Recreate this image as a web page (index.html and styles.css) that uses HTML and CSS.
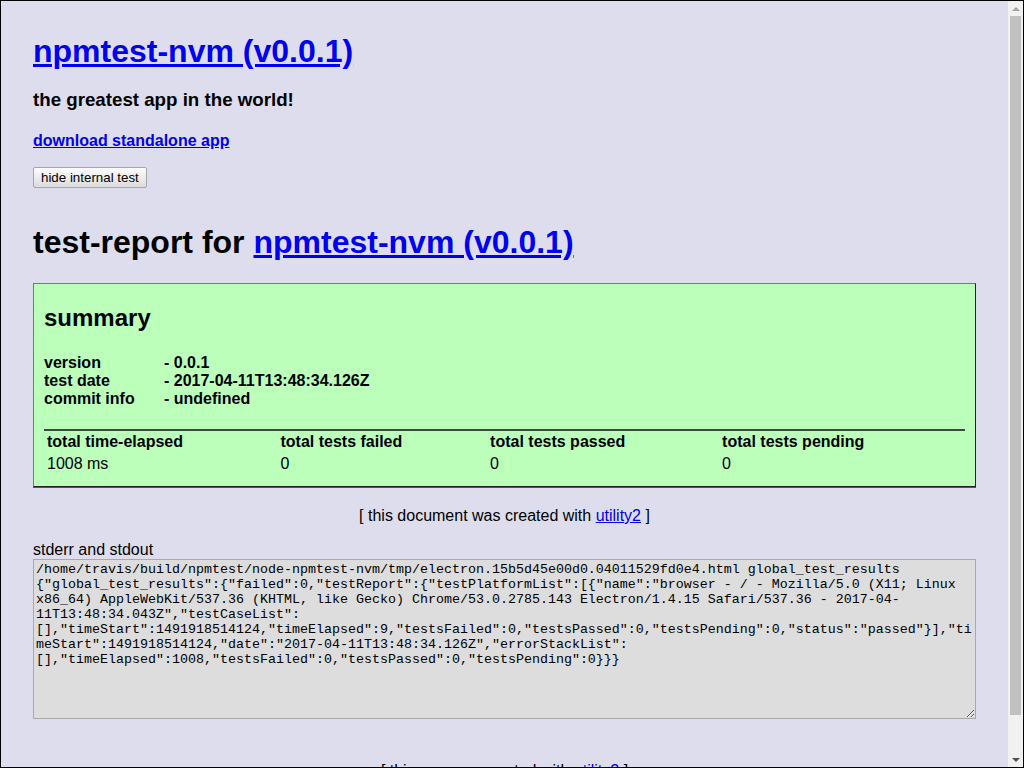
FILE: index.html
```html
<!DOCTYPE html>
<html>
<head>
<meta charset="utf-8">
<title>npmtest-nvm (v0.0.1)</title>
<link rel="stylesheet" href="styles.css">
</head>
<body>
<div class="frame">
  <div class="viewport">
    <div class="page">
      <h1 class="title"><a href="#">npmtest-nvm (v0.0.1)</a></h1>
      <h3 class="tagline">the greatest app in the world!</h3>
      <h4 class="download"><a href="#">download standalone app</a></h4>
      <button class="toggle">hide internal test</button>

      <h1 class="report-title">test-report for <a href="#">npmtest-nvm (v0.0.1)</a></h1>

      <div class="summary">
        <h2 class="summary-title">summary</h2>
        <div class="info">
          <div class="info-row"><span class="info-key">version</span><span>- 0.0.1</span></div>
          <div class="info-row"><span class="info-key">test date</span><span>- 2017-04-11T13:48:34.126Z</span></div>
          <div class="info-row"><span class="info-key">commit info</span><span>- undefined</span></div>
        </div>
        <table class="totals">
          <thead>
            <tr><th>total time-elapsed</th><th>total tests failed</th><th>total tests passed</th><th>total tests pending</th></tr>
          </thead>
          <tbody>
            <tr><td>1008 ms</td><td>0</td><td>0</td><td>0</td></tr>
          </tbody>
        </table>
      </div>

      <div class="credit">[ this document was created with <a href="#">utility2</a> ]</div>

      <label class="output-label">stderr and stdout</label>
      <textarea class="output" readonly>/home/travis/build/npmtest/node-npmtest-nvm/tmp/electron.15b5d45e00d0.04011529fd0e4.html global_test_results {"global_test_results":{"failed":0,"testReport":{"testPlatformList":[{"name":"browser - / - Mozilla/5.0 (X11; Linux x86_64) AppleWebKit/537.36 (KHTML, like Gecko) Chrome/53.0.2785.143 Electron/1.4.15 Safari/537.36 - 2017-04-11T13:48:34.043Z","testCaseList":[],"timeStart":1491918514124,"timeElapsed":9,"testsFailed":0,"testsPassed":0,"testsPending":0,"status":"passed"}],"timeStart":1491918514124,"date":"2017-04-11T13:48:34.126Z","errorStackList":[],"timeElapsed":1008,"testsFailed":0,"testsPassed":0,"testsPending":0}}}</textarea>

      <div class="credit footer">[ this app was created with <a href="#">utility2</a> ]</div>
    </div>
  </div>
  <div class="scrollbar" aria-hidden="true">
    <div class="sb-button"><span class="arrow-up"></span></div>
    <div class="sb-track"><div class="sb-thumb"></div></div>
    <div class="sb-button"><span class="arrow-down"></span></div>
  </div>
</div>
</body>
</html>
```

FILE: styles.css
```css
html, body {
  margin: 0;
  padding: 0;
}

.frame {
  width: 1024px;
  height: 768px;
  box-sizing: border-box;
  border: 1px solid #000;
  display: flex;
  background: #dde;
  color: #000;
  font-family: "Liberation Sans", Arial, sans-serif;
  font-size: 16px;
  overflow: hidden;
}

.viewport {
  flex: 1;
  min-width: 0;
  overflow: hidden;
}

.page {
  padding: 0 32px 26px;
  display: flow-root;
}

/* scrollbar */
.scrollbar {
  width: 15px;
  flex: none;
  background: #f1f1f1;
  display: flex;
  flex-direction: column;
}

.sb-button {
  height: 15px;
  flex: none;
  display: flex;
  align-items: center;
  justify-content: center;
}

.arrow-up {
  width: 0;
  height: 0;
  border-left: 4px solid transparent;
  border-right: 4px solid transparent;
  border-bottom: 4px solid #a3a3a3;
}

.arrow-down {
  width: 0;
  height: 0;
  border-left: 4px solid transparent;
  border-right: 4px solid transparent;
  border-top: 4px solid #505050;
}

.sb-track {
  flex: 1;
  padding: 0 2px;
}

.sb-thumb {
  height: 699px;
  background: #c1c1c1;
}

a {
  color: #00e;
  text-decoration: underline;
}

.title {
  font-size: 32px;
  line-height: 37px;
  margin: 32px 0 0;
}

.tagline {
  font-size: 18.72px;
  line-height: 22px;
  margin: 19px 0 0;
}

.download {
  font-size: 16px;
  line-height: 18px;
  margin: 21px 0 0;
}

.toggle {
  display: block;
  margin: 17px 0 0;
  height: 21px;
  padding: 0 7px;
  font-family: "Liberation Sans", Arial, sans-serif;
  font-size: 13.33px;
  color: #000;
  background: linear-gradient(#fdfdfd, #dcdcdc);
  border: 1px solid #a6a6a6;
  border-radius: 2px;
}

.report-title {
  font-size: 32px;
  line-height: 37px;
  margin: 36px 0 0;
}

.summary {
  margin-top: 22px;
  padding: 0 10px 11px;
  background: #bfb;
  border: 1px solid;
  border-color: #777 #222 #222 #777;
  box-shadow: 0 1px 0 #555;
}

.summary-title {
  font-size: 24px;
  line-height: 28px;
  margin: 20px 0 0;
}

.info {
  margin-top: 22px;
  font-weight: bold;
  line-height: 18px;
}

.info-key {
  display: inline-block;
  width: 120px;
}

.totals {
  width: 100%;
  margin-top: 21px;
  border-top: 2px solid #444;
  border-spacing: 2px;
  font-size: 16px;
}

.totals th,
.totals td {
  padding: 0 1px;
  text-align: left;
  line-height: 18px;
}

.totals th {
  font-weight: bold;
}

.totals td {
  padding-top: 2px;
}

.credit {
  margin-top: 20px;
  text-align: center;
  line-height: 18px;
}

.output-label {
  display: block;
  margin-top: 16px;
  line-height: 18px;
}

.output {
  display: block;
  box-sizing: border-box;
  width: 100%;
  height: 160px;
  margin: 0;
  padding: 2px;
  border: 1px solid #a9a9a9;
  background: #ddd;
  color: #000;
  font-family: "Liberation Mono", "Courier New", monospace;
  font-size: 13.33px;
  line-height: 15px;
  resize: both;
}

.footer {
  margin-top: 43px;
}
```
